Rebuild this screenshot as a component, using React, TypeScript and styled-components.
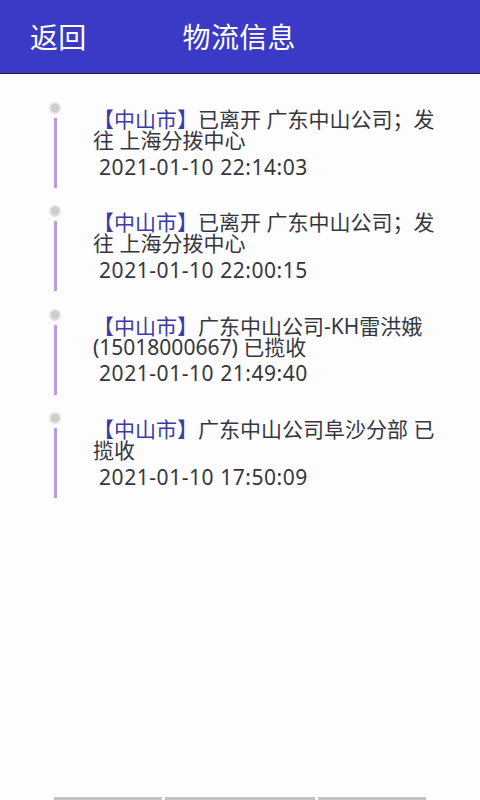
import React from "react";
import styled, { createGlobalStyle } from "styled-components";

const Global = createGlobalStyle`
  html, body { margin: 0; padding: 0; background: #fdfdfd; }
  body { font-family: "Noto Sans", "Noto Sans CJK SC", sans-serif; }
  * { box-sizing: border-box; }
`;

const Page = styled.div`
  min-height: 100vh;
  display: flex;
  flex-direction: column;
  background: #fdfdfd;
`;

const Header = styled.header`
  height: 74px;
  background: #3b3ac6;
  border-bottom: 1px solid #1e1e40;
  display: flex;
  align-items: center;
  padding: 0 0 2px 30px;
  gap: 96px;
  color: #ffffff;
  font-family: "Noto Sans CJK SC", sans-serif;
  font-size: 28px;
  line-height: 1;
`;

const HeaderText = styled.span`
  letter-spacing: 0.3px;
`;

const List = styled.main`
  flex: 1;
  display: flex;
  flex-direction: column;
  padding: 26px 20px 0 49px;
`;

const Item = styled.div`
  height: 103.4px;
  display: flex;
  gap: 32px;
`;

const Rail = styled.div`
  width: 12px;
  display: flex;
  flex-direction: column;
  align-items: center;
  padding-top: 2px;
`;

const Dot = styled.div`
  width: 12px;
  height: 12px;
  flex-shrink: 0;
  border-radius: 50%;
  background: #cdcdcd;
  border: 2px solid #e2e2e2;
`;

const Line = styled.div`
  width: 3px;
  height: 70px;
  margin-top: 4px;
  background: #b79de0;
`;

const Body = styled.div`
  flex: 1;
  padding-top: 9px;
  color: #363640;
`;

const Desc = styled.div`
  font-family: "Noto Sans", "Noto Sans CJK SC", sans-serif;
  font-size: 21px;
  line-height: 21px;
  width: 350px;
`;

const City = styled.span`
  color: #3a3aa8;
`;

const Time = styled.div`
  font-family: "Noto Sans", "Noto Sans CJK SC", sans-serif;
  font-size: 21px;
  line-height: 22px;
  margin-top: 4.5px;
  letter-spacing: 0.55px;
  white-space: pre;
`;

const BottomBar = styled.div`
  display: flex;
  gap: 3px;
  padding-left: 54px;
  height: 3px;
`;

const Seg = styled.div<{ $w: number }>`
  width: ${(p) => p.$w}px;
  height: 3px;
  background: #c2c2c2;
`;

const items = [
  { text: "已离开 广东中山公司；发往 上海分拨中心", time: "2021-01-10 22:14:03" },
  { text: "已离开 广东中山公司；发往 上海分拨中心", time: "2021-01-10 22:00:15" },
  { text: "广东中山公司-KH雷洪娥(15018000667) 已揽收", time: "2021-01-10 21:49:40" },
  { text: "广东中山公司阜沙分部 已揽收", time: "2021-01-10 17:50:09" },
];

export default function App() {
  return (
    <>
      <Global />
      <Page>
        <Header>
          <HeaderText>返回</HeaderText>
          <HeaderText>物流信息</HeaderText>
        </Header>
        <List>
          {items.map((it, i) => (
            <Item key={i}>
              <Rail>
                <Dot />
                <Line />
              </Rail>
              <Body>
                <Desc>
                  <City>【中山市】</City>
                  {it.text}
                </Desc>
                <Time>{" " + it.time}</Time>
              </Body>
            </Item>
          ))}
        </List>
        <BottomBar>
          <Seg $w={108} />
          <Seg $w={150} />
          <Seg $w={108} />
        </BottomBar>
      </Page>
    </>
  );
}
